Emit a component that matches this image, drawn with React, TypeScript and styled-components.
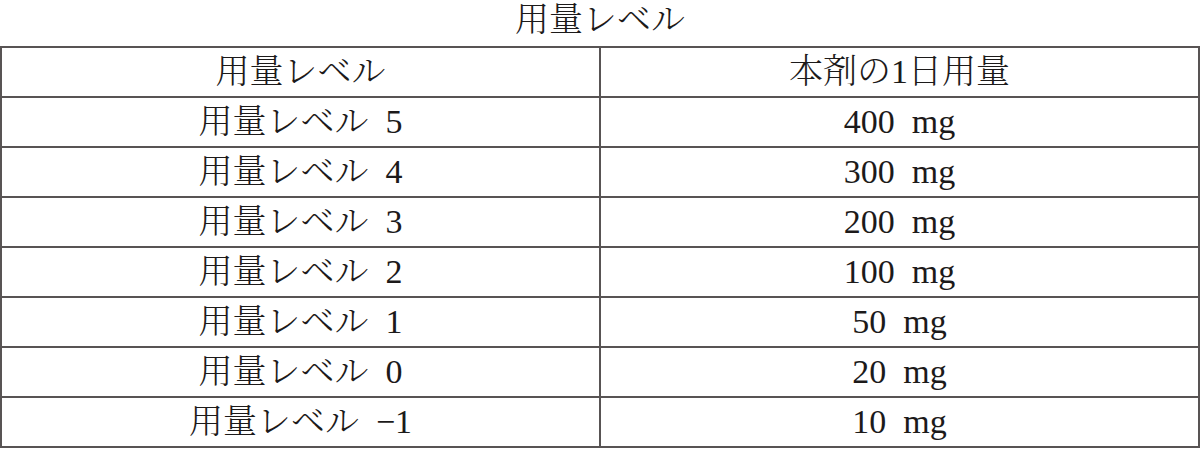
import React from "react";
import styled, { createGlobalStyle } from "styled-components";

const GlobalStyle = createGlobalStyle`
  html, body {
    margin: 0;
    padding: 0;
    background: #ffffff;
  }
  body {
    font-family: "Liberation Serif", "Noto Serif CJK JP", "Noto Sans CJK JP", serif;
    color: #1c1a1a;
  }
`;

const Page = styled.div`
  width: 1200px;
  display: flex;
  flex-direction: column;
`;

const Title = styled.div`
  height: 46px;
  line-height: 40px;
  font-size: 34px;
  text-align: center;
  font-weight: 300;
`;

const Table = styled.table`
  width: 1200px;
  border-collapse: collapse;
  table-layout: fixed;
`;

const Row = styled.tr`
  height: 50px;
`;

const Cell = styled.td`
  border: 2px solid #585454;
  width: 50%;
  padding: 0;
  text-align: center;
  vertical-align: middle;
  font-size: 34px;
  line-height: 46px;
  font-weight: 300;
  word-spacing: 0.25em;
  white-space: nowrap;
`;

const rows: [string, string][] = [
  ["用量レベル 5", "400 mg"],
  ["用量レベル 4", "300 mg"],
  ["用量レベル 3", "200 mg"],
  ["用量レベル 2", "100 mg"],
  ["用量レベル 1", "50 mg"],
  ["用量レベル 0", "20 mg"],
  ["用量レベル −1", "10 mg"],
];

export default function App() {
  return (
    <>
      <GlobalStyle />
      <Page>
        <Title>用量レベル</Title>
        <Table>
          <tbody>
            <Row>
              <Cell>用量レベル</Cell>
              <Cell>本剤の1日用量</Cell>
            </Row>
            {rows.map(([level, dose]) => (
              <Row key={level}>
                <Cell>{level}</Cell>
                <Cell>{dose}</Cell>
              </Row>
            ))}
          </tbody>
        </Table>
      </Page>
    </>
  );
}
